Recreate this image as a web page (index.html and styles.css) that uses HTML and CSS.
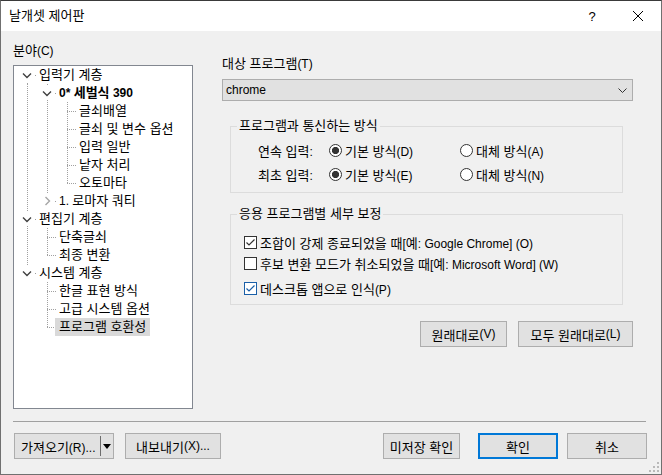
FILE: index.html
```html
<!DOCTYPE html>
<html lang="ko">
<head>
<meta charset="utf-8">
<title>날개셋 제어판</title>
<link rel="stylesheet" href="styles.css">
</head>
<body>
<div class="window">
  <div class="titlebar">
    <div class="title">날개셋 제어판</div>
    <div class="tb-btn"><span class="l">?</span></div>
    <div class="tb-btn"><svg width="10" height="10" viewBox="0 0 10 10"><path d="M0 0L10 10M10 0L0 10" stroke="#000" stroke-width="1" fill="none"/></svg></div>
  </div>
  <div class="client">
    <div class="main">
      <div class="leftcol">
        <div class="label">분야<span class="l">(C)</span></div>
        <div class="tree">
          <div class="row"><span class="tg down"><svg class="exp" width="14" height="14" viewBox="0 0 14 14"><rect width="14" height="14" fill="#fff"/><path d="M3 5.5L7 9.5L11 5.5" fill="none" stroke="#404040" stroke-width="1.4"/></svg></span><span class="txt">입력기 계층</span></div>
          <div class="row"><span class="tg v"></span><span class="tg tee"><svg class="exp" width="14" height="14" viewBox="0 0 14 14"><rect width="14" height="14" fill="#fff"/><path d="M3 5.5L7 9.5L11 5.5" fill="none" stroke="#404040" stroke-width="1.4"/></svg></span><span class="txt bold"><span class="l">0* </span>세벌식<span class="l"> 390</span></span></div>
          <div class="row"><span class="tg v"></span><span class="tg v"></span><span class="tg tee"></span><span class="txt">글쇠배열</span></div>
          <div class="row"><span class="tg v"></span><span class="tg v"></span><span class="tg tee"></span><span class="txt">글쇠 및 변수 옵션</span></div>
          <div class="row"><span class="tg v"></span><span class="tg v"></span><span class="tg tee"></span><span class="txt">입력 일반</span></div>
          <div class="row"><span class="tg v"></span><span class="tg v"></span><span class="tg tee"></span><span class="txt">낱자 처리</span></div>
          <div class="row"><span class="tg v"></span><span class="tg v"></span><span class="tg elbow"></span><span class="txt">오토마타</span></div>
          <div class="row"><span class="tg v"></span><span class="tg elbow"><svg class="exp" width="14" height="14" viewBox="0 0 14 14"><rect width="14" height="14" fill="#fff"/><path d="M5.5 3L9.5 7L5.5 11" fill="none" stroke="#a6a6a6" stroke-width="1.4"/></svg></span><span class="txt"><span class="l">1. </span>로마자 쿼티</span></div>
          <div class="row"><span class="tg tee"><svg class="exp" width="14" height="14" viewBox="0 0 14 14"><rect width="14" height="14" fill="#fff"/><path d="M3 5.5L7 9.5L11 5.5" fill="none" stroke="#404040" stroke-width="1.4"/></svg></span><span class="txt">편집기 계층</span></div>
          <div class="row"><span class="tg v"></span><span class="tg tee"></span><span class="txt">단축글쇠</span></div>
          <div class="row"><span class="tg v"></span><span class="tg elbow"></span><span class="txt">최종 변환</span></div>
          <div class="row"><span class="tg elbow"><svg class="exp" width="14" height="14" viewBox="0 0 14 14"><rect width="14" height="14" fill="#fff"/><path d="M3 5.5L7 9.5L11 5.5" fill="none" stroke="#404040" stroke-width="1.4"/></svg></span><span class="txt">시스템 계층</span></div>
          <div class="row"><span class="tg"></span><span class="tg tee"></span><span class="txt">한글 표현 방식</span></div>
          <div class="row"><span class="tg"></span><span class="tg tee"></span><span class="txt">고급 시스템 옵션</span></div>
          <div class="row"><span class="tg"></span><span class="tg elbow"></span><span class="txt sel">프로그램 호환성</span></div>
        </div>
      </div>
      <div class="rightcol">
        <div class="label">대상 프로그램<span class="l">(T)</span></div>
        <div class="combo"><span class="l">chrome</span><svg width="9" height="5" viewBox="0 0 9 5"><path d="M0.5 0.5L4.5 4.5L8.5 0.5" fill="none" stroke="#333" stroke-width="1"/></svg></div>
        <fieldset class="grp grp1">
          <legend>프로그램과 통신하는 방식</legend>
          <div class="radiorow"><span class="rl">연속 입력<span class="l">:</span></span><span class="opt opt1"><span class="radio on"></span><span>기본 방식<span class="l">(D)</span></span></span><span class="opt"><span class="radio"></span><span>대체 방식<span class="l">(A)</span></span></span></div>
          <div class="radiorow"><span class="rl">최초 입력<span class="l">:</span></span><span class="opt opt1"><span class="radio on"></span><span>기본 방식<span class="l">(E)</span></span></span><span class="opt"><span class="radio"></span><span>대체 방식<span class="l">(N)</span></span></span></div>
        </fieldset>
        <fieldset class="grp grp2">
          <legend>응용 프로그램별 세부 보정</legend>
          <div class="chkrow"><span class="chk"><svg width="11" height="11" viewBox="0 0 11 11"><path d="M1.5 5.5L4 8L9.5 2.5" fill="none" stroke="#333" stroke-width="1.2"/></svg></span><span>조합이 강제 종료되었을 때<span class="l">[</span>예<span class="l">: Google Chrome] (O)</span></span></div>
          <div class="chkrow"><span class="chk"></span><span>후보 변환 모드가 취소되었을 때<span class="l">[</span>예<span class="l">: Microsoft Word] (W)</span></span></div>
          <div class="chkrow last"><span class="chk blue"><svg width="11" height="11" viewBox="0 0 11 11"><path d="M1.5 5.5L4 8L9.5 2.5" fill="none" stroke="#1a5fa8" stroke-width="1.2"/></svg></span><span>데스크톱 앱으로 인식<span class="l">(P)</span></span></div>
        </fieldset>
        <div class="btnrow">
          <div class="btn w87">원래대로<span class="l">(V)</span></div>
          <div class="btn w115">모두 원래대로<span class="l">(L)</span></div>
        </div>
      </div>
    </div>
    <div class="sep"></div>
    <div class="bottom">
      <div class="btn split"><span class="splabel">가져오기<span class="l">(R)...</span></span><span class="spdiv"></span><svg width="8" height="5" viewBox="0 0 8 5"><path d="M0 0H8L4 5Z" fill="#000"/></svg></div>
      <div class="btn export">내보내기<span class="l">(X)...</span></div>
      <div class="btn unsaved">미저장 확인</div>
      <div class="btn ok">확인</div>
      <div class="btn cancel">취소</div>
    </div>
  </div>
  <svg class="grip" width="12" height="12" viewBox="0 0 12 12"><g fill="#b9b9b9"><rect x="9" y="1" width="2" height="2"/><rect x="5" y="5" width="2" height="2"/><rect x="9" y="5" width="2" height="2"/><rect x="1" y="9" width="2" height="2"/><rect x="5" y="9" width="2" height="2"/><rect x="9" y="9" width="2" height="2"/></g></svg>
</div>
</body>
</html>
```
FILE: styles.css
```css
html, body {
  margin: 0;
  padding: 0;
}
body {
  font-family: "Liberation Sans", "Noto Sans CJK KR", sans-serif;
  font-size: 13px;
  color: #000;
  background: #f0f0f0;
}
.l {
  font-size: 12px;
}
.window {
  position: relative;
  width: 662px;
  height: 475px;
  box-sizing: border-box;
  border: 1px solid #707070;
  border-top-color: #3a3a3a;
  background: #f0f0f0;
  overflow: hidden;
}
.titlebar {
  height: 30px;
  background: #fff;
  display: flex;
  align-items: center;
}
.title {
  flex: 1;
  padding-left: 8px;
  line-height: 30px;
}
.tb-btn {
  width: 46px;
  height: 30px;
  display: flex;
  align-items: center;
  justify-content: center;
}
.tb-btn .l {
  font-size: 13px;
}
.client {
  height: 443px;
}
.main {
  height: 390px;
  display: flex;
}
.label {
  line-height: 18px;
  height: 18px;
  white-space: nowrap;
}
.leftcol {
  margin-left: 12px;
  width: 180px;
  padding-top: 11px;
}
.tree {
  margin-top: 5px;
  height: 344px;
  box-sizing: border-box;
  border: 1px solid #828790;
  background: #fff;
  padding-left: 3px;
}
.row {
  display: flex;
  height: 18px;
  align-items: center;
}
.tg {
  width: 20px;
  height: 18px;
  flex: none;
  display: flex;
  align-items: center;
  justify-content: center;
  background-repeat: no-repeat;
}
.v {
  background-image: repeating-linear-gradient(to bottom, #a0a0a0 0 1px, transparent 1px 2px);
  background-size: 1px 18px;
  background-position: 10px 0;
}
.tee {
  background-image: repeating-linear-gradient(to bottom, #a0a0a0 0 1px, transparent 1px 2px), repeating-linear-gradient(to right, #a0a0a0 0 1px, transparent 1px 2px);
  background-size: 1px 18px, 10px 1px;
  background-position: 10px 0, 10px 9px;
}
.elbow {
  background-image: repeating-linear-gradient(to bottom, #a0a0a0 0 1px, transparent 1px 2px), repeating-linear-gradient(to right, #a0a0a0 0 1px, transparent 1px 2px);
  background-size: 1px 10px, 10px 1px;
  background-position: 10px 0, 10px 9px;
}
.down {
  background-image: repeating-linear-gradient(to bottom, #a0a0a0 0 1px, transparent 1px 2px), repeating-linear-gradient(to right, #a0a0a0 0 1px, transparent 1px 2px);
  background-size: 1px 9px, 10px 1px;
  background-position: 10px 9px, 10px 9px;
}
.exp {
  display: block;
}
.txt {
  margin-left: -2px;
  padding: 0 4px;
  line-height: 18px;
  height: 18px;
  white-space: nowrap;
}
.bold {
  font-weight: bold;
}
.sel {
  background: #d9d9d9;
}
.rightcol {
  margin-left: 29px;
  width: 411px;
  padding-top: 24px;
}
.combo {
  margin-top: 6px;
  height: 22px;
  box-sizing: border-box;
  border: 1px solid #adadad;
  background: #e1e1e1;
  display: flex;
  align-items: center;
  justify-content: space-between;
  padding: 0 5px 0 3px;
}
.combo span {
  line-height: 20px;
}
.grp {
  margin: 0 0 0 8px;
  width: 393px;
  min-width: 0;
  box-sizing: border-box;
  border: 1px solid #dcdcdc;
  padding: 0;
}
.grp legend {
  margin-left: 6px;
  padding: 0 2px;
  line-height: 16px;
  height: 16px;
  white-space: nowrap;
}
.grp1 {
  margin-top: 17px;
  padding: 4px 0 6px 0;
}
.grp2 {
  margin-top: 13px;
  padding: 10px 0 5px 0;
}
.radiorow {
  display: flex;
  align-items: center;
  height: 24px;
  padding-left: 27px;
  white-space: nowrap;
}
.rl {
  width: 71px;
  flex: none;
}
.opt {
  display: flex;
  align-items: center;
  gap: 3px;
}
.opt1 {
  width: 131px;
  flex: none;
}
.radio {
  width: 13px;
  height: 13px;
  box-sizing: border-box;
  border: 1px solid #333;
  border-radius: 50%;
  background: #fff;
  flex: none;
}
.radio.on {
  background: radial-gradient(circle, #333 0 3.3px, #fff 3.9px);
}
.chkrow {
  display: flex;
  align-items: center;
  height: 21px;
  padding-left: 13px;
  gap: 3px;
  white-space: nowrap;
}
.chkrow.last {
  margin-top: 4px;
}
.chk {
  width: 13px;
  height: 13px;
  box-sizing: border-box;
  border: 1px solid #333;
  background: #fff;
  flex: none;
  display: flex;
  align-items: center;
  justify-content: center;
}
.chk.blue {
  border-color: #1a5fa8;
}
.chk svg {
  display: block;
}
.btnrow {
  margin-top: 16px;
  display: flex;
  justify-content: flex-end;
  gap: 11px;
}
.btn {
  height: 26px;
  box-sizing: border-box;
  border: 1px solid #adadad;
  background: #e1e1e1;
  display: flex;
  align-items: center;
  justify-content: center;
  white-space: nowrap;
  flex: none;
}
.w87 { width: 87px; }
.w115 { width: 115px; }
.sep {
  margin-left: 12px;
  width: 633px;
  height: 1px;
  background: #a0a0a0;
}
.bottom {
  margin-top: 11px;
  display: flex;
  padding-left: 13px;
}
.split {
  width: 100px;
  justify-content: flex-start;
  padding-left: 6px;
}
.splabel {
  width: 79px;
}
.spdiv {
  width: 1px;
  height: 20px;
  background: #6d6d6d;
  margin-right: 2px;
}
.export {
  width: 96px;
  margin-left: 11px;
}
.unsaved {
  width: 77px;
  margin-left: 162px;
}
.ok {
  width: 80px;
  margin-left: 18px;
  border: 2px solid #0078d7;
}
.cancel {
  width: 80px;
  margin-left: 9px;
}
.grip {
  position: absolute;
  right: 1px;
  bottom: 1px;
}
```
